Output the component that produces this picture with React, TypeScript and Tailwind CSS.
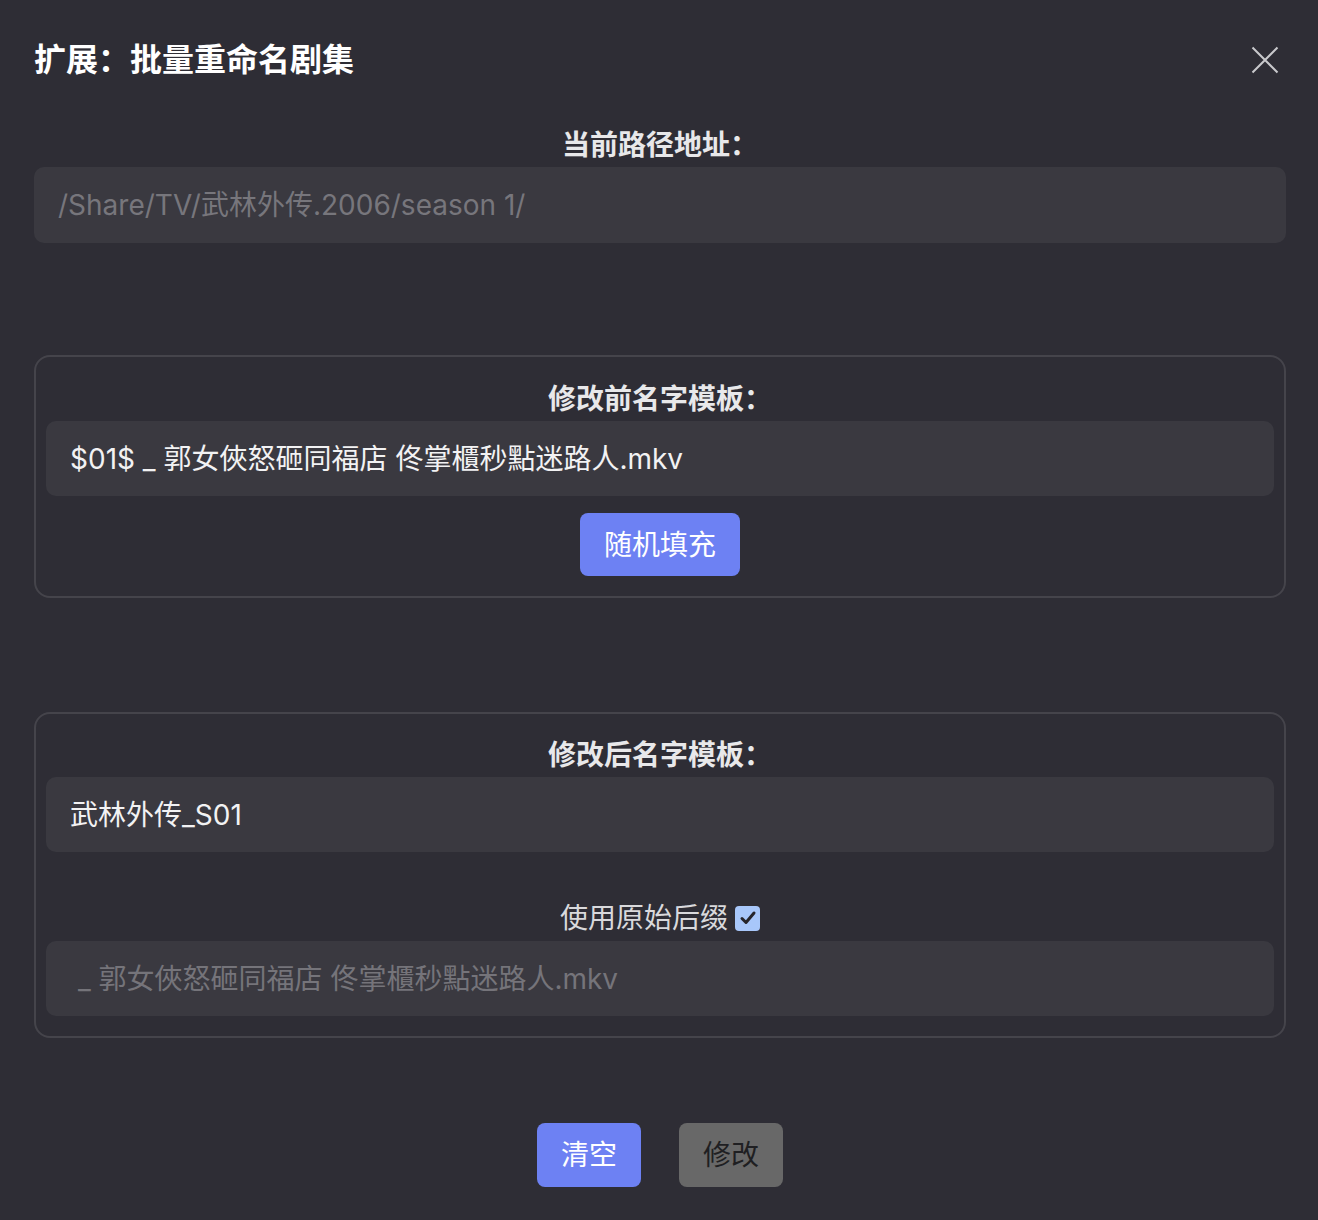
export default function App() {
  const font = { fontFamily: '"Inter", "Noto Sans CJK SC", sans-serif' };

  return (
    <div className="min-h-screen w-full bg-[#2e2d35] pl-[34px] pr-[32px] pb-[33px]" style={font}>
      {/* header */}
      <div className="flex h-[120px] items-center justify-between">
        <h1 className="text-[32px] font-bold leading-none text-white">扩展：批量重命名剧集</h1>
        <button className="mr-[7px] flex h-[28px] w-[28px] items-center justify-center text-[#c9c9cc]">
          <svg width="28" height="28" viewBox="0 0 28 28" fill="none" stroke="currentColor" strokeWidth="2">
            <path d="M1.5 1.5 L26.5 26.5 M26.5 1.5 L1.5 26.5" />
          </svg>
        </button>
      </div>

      {/* current path */}
      <div className="mt-[7px] h-[36px] text-center text-[28px] font-bold leading-[36px] text-[#e8e8ea]">
        当前路径地址：
      </div>
      <div className="mt-[4px] flex h-[76px] items-center rounded-[10px] bg-[#3a3940] px-[24px] text-[28px] text-[#77767c]">
        /Share/TV/武林外传.2006/season 1/
      </div>

      {/* before template */}
      <div className="mt-[112px] rounded-[16px] border-2 border-[#45444b] px-[10px] pt-[24px] pb-[20px]">
        <div className="h-[36px] text-center text-[28px] font-bold leading-[36px] text-[#e8e8ea]">
          修改前名字模板：
        </div>
        <div className="mt-[4px] flex h-[75px] items-center rounded-[10px] bg-[#3a3940] px-[24px] text-[28px] text-[#f2f2f3]">
          $01$ _ 郭女俠怒砸同福店 佟掌櫃秒點迷路人.mkv
        </div>
        <div className="mt-[17px] flex justify-center">
          <button className="h-[63px] w-[160px] rounded-[8px] bg-[#6d81f3] text-[28px] text-white">随机填充</button>
        </div>
      </div>

      {/* after template */}
      <div className="mt-[114px] rounded-[16px] border-2 border-[#45444b] px-[10px] pt-[23px] pb-[20px]">
        <div className="h-[36px] text-center text-[28px] font-bold leading-[36px] text-[#e8e8ea]">
          修改后名字模板：
        </div>
        <div className="mt-[4px] flex h-[75px] items-center rounded-[10px] bg-[#3a3940] px-[24px] text-[28px] text-[#f2f2f3]">
          武林外传_S01
        </div>
        <div className="mt-[48px] flex h-[36px] items-center justify-center gap-[7px] text-[28px] text-[#d9d9dc]">
          <span>使用原始后缀</span>
          <span className="flex h-[25px] w-[25px] items-center justify-center rounded-[4px] bg-[#a8c7fa]">
            <svg width="18" height="18" viewBox="0 0 18 18" fill="none" stroke="#26252b" strokeWidth="3" strokeLinecap="round" strokeLinejoin="round">
              <path d="M3 9.5 L7 13.5 L15 4" />
            </svg>
          </span>
        </div>
        <div className="mt-[5px] flex h-[75px] items-center whitespace-pre rounded-[10px] bg-[#3a3940] px-[24px] text-[28px] text-[#75747a]">
          {' _ 郭女俠怒砸同福店 佟掌櫃秒點迷路人.mkv'}
        </div>
      </div>

      {/* actions */}
      <div className="mt-[85px] flex justify-center gap-[38px]">
        <button className="h-[64px] w-[104px] rounded-[8px] bg-[#6d81f3] text-[28px] text-white">清空</button>
        <button className="h-[64px] w-[104px] rounded-[8px] bg-[#686868] text-[28px] text-[#1f1f22]">修改</button>
      </div>
    </div>
  );
}
